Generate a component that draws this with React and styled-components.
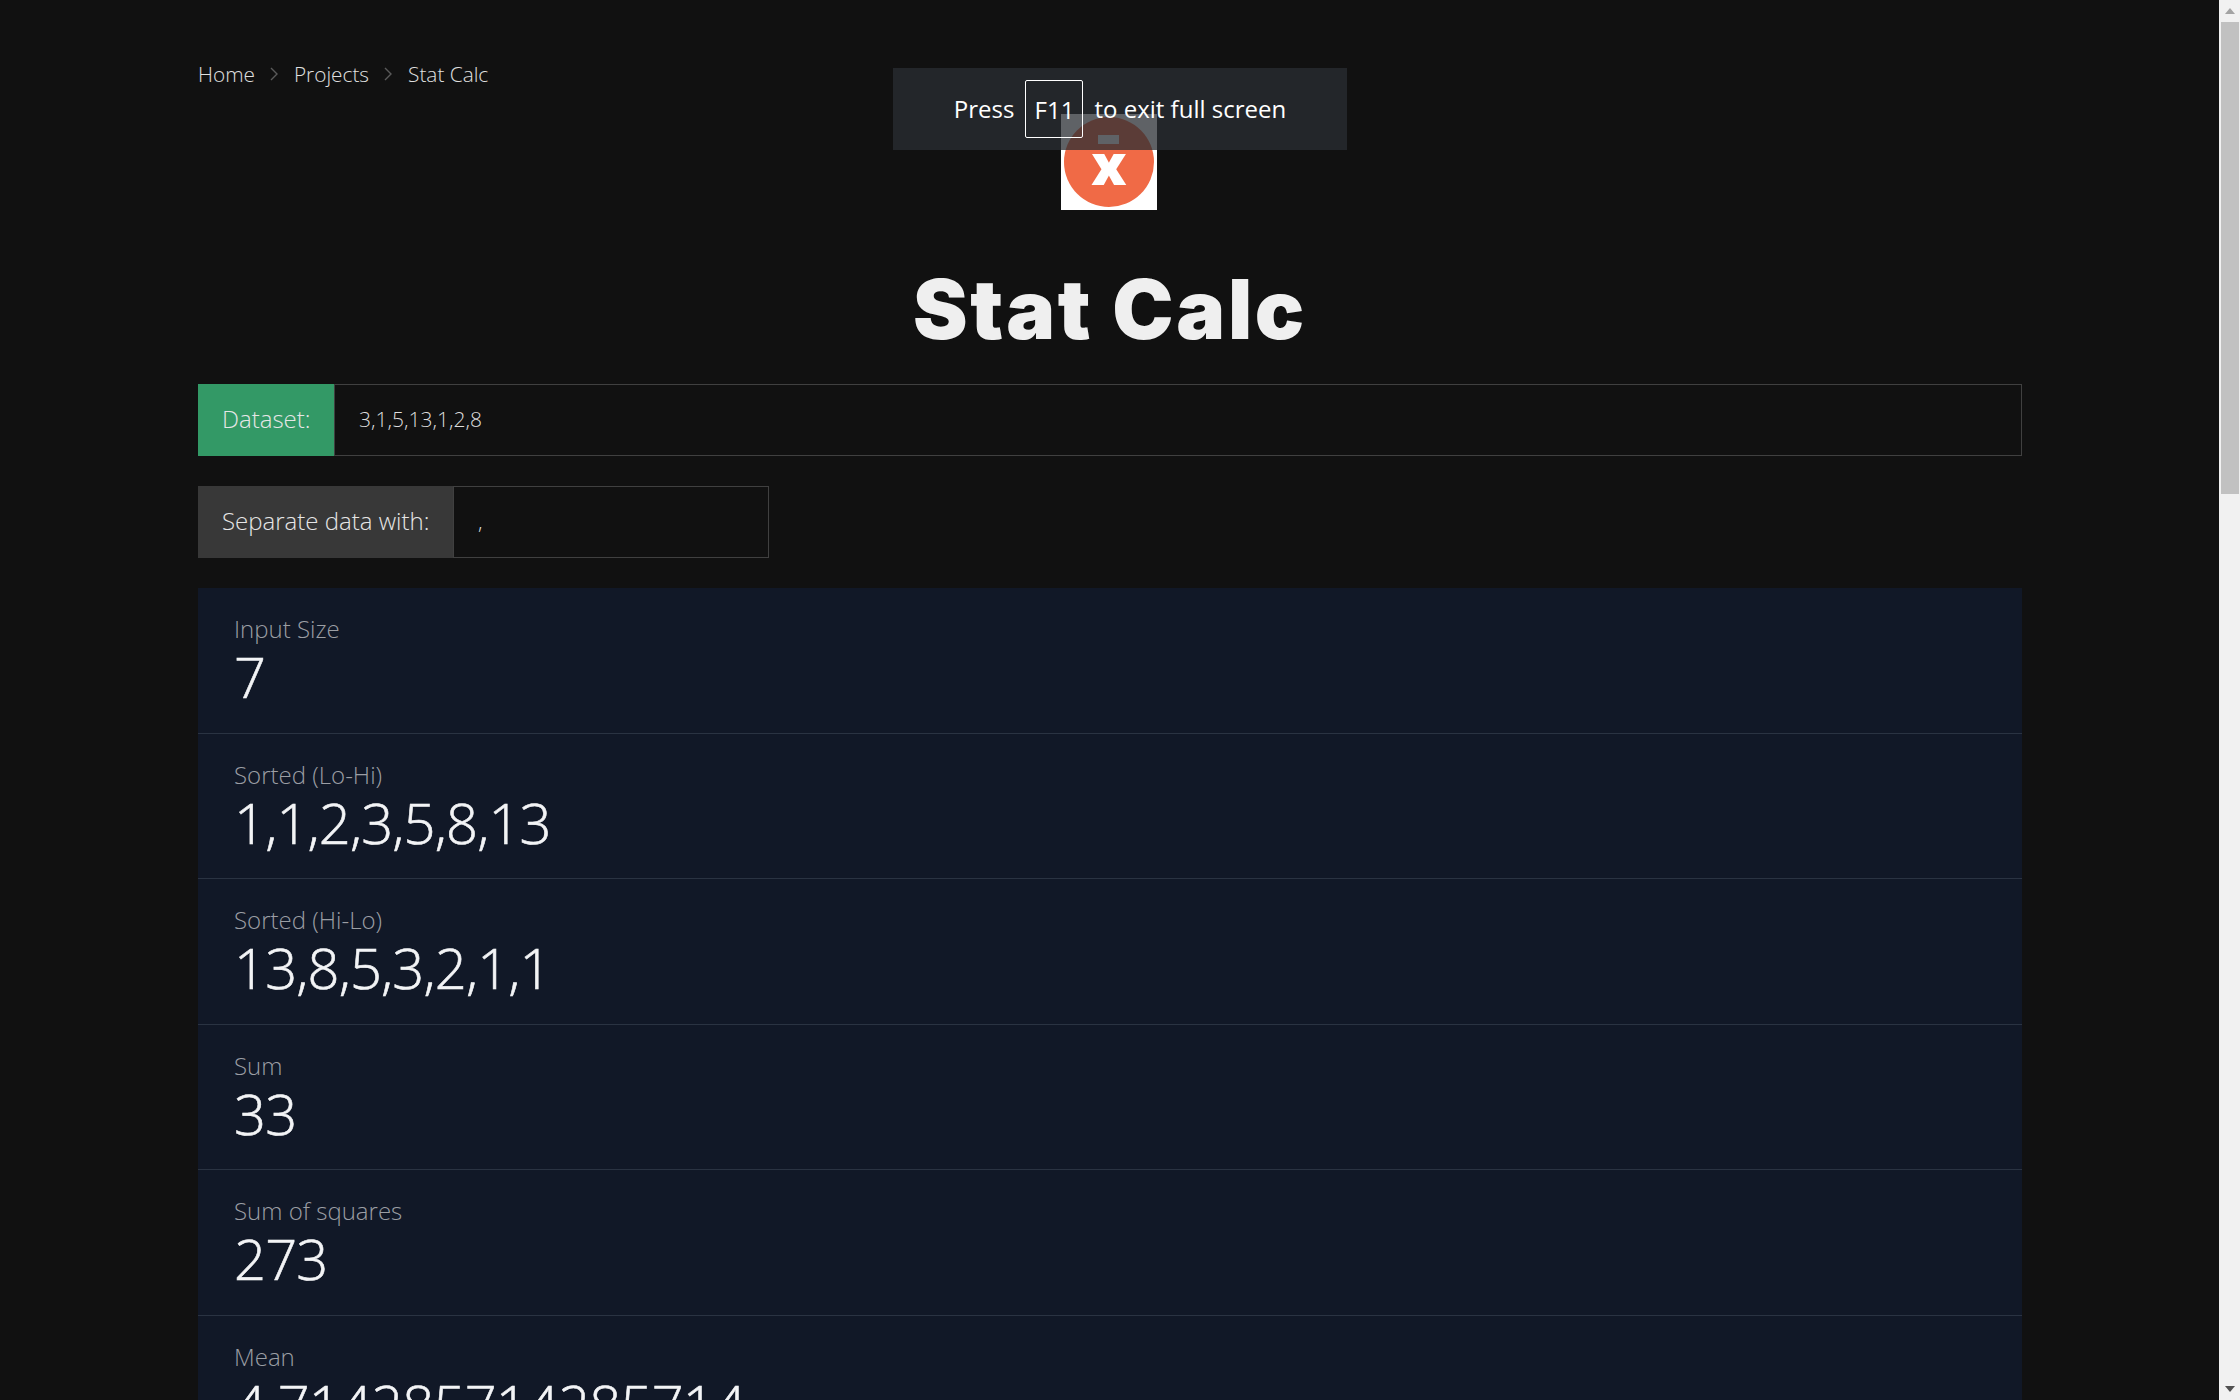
import styled, { createGlobalStyle } from "styled-components";

const dataset = [3, 1, 5, 13, 1, 2, 8];
const asc = [...dataset].sort((a, b) => a - b);
const desc = [...asc].reverse();
const sum = dataset.reduce((a, b) => a + b, 0);
const squares = dataset.reduce((a, b) => a + b * b, 0);

const stats = [
  { label: "Input Size", value: dataset.length },
  { label: "Sorted (Lo-Hi)", value: asc.join(",") },
  { label: "Sorted (Hi-Lo)", value: desc.join(",") },
  { label: "Sum", value: sum },
  { label: "Sum of squares", value: squares },
  { label: "Mean", value: sum / dataset.length },
];

const GlobalStyle = createGlobalStyle`
  html, body {
    margin: 0;
    padding: 0;
    height: 100%;
    overflow: hidden;
    background: #111111;
  }
  * {
    box-sizing: border-box;
  }
`;

const Page = styled.div`
  position: relative;
  display: flex;
  height: 100vh;
  overflow: hidden;
  background: #111111;
  font-family: "Open Sans", "Liberation Sans", sans-serif;
  font-weight: 300;
  color: #e5e5e5;
`;

const Main = styled.main`
  flex: 1;
  min-width: 0;
  padding: 56px 197px 0 198px;
`;

const Crumbs = styled.nav`
  display: flex;
  align-items: center;
  height: 36px;
  font-size: 20.8px;
  color: #e0e0e0;
`;

const Chevron = styled.svg`
  width: 10px;
  height: 14px;
  margin: 0 15px 0 14px;
  fill: none;
  stroke: #5a5a5a;
  stroke-width: 1.4;
`;

const Logo = styled.svg`
  display: block;
  width: 96px;
  height: 96px;
  margin: 22px 0 0 863px;
`;

const Title = styled.h1`
  margin: 50px 0 0;
  height: 124px;
  line-height: 100px;
  text-align: center;
  font-family: "Inter", "Liberation Sans", sans-serif;
  font-size: 82px;
  font-weight: 900;
  letter-spacing: 2.7px;
  color: #efefef;
`;

const Group = styled.div`
  display: flex;
  height: 72px;
  width: ${(p) => p.$width || "100%"};
  margin-top: ${(p) => p.$top || "0"};
  font-size: 24px;
`;

const Addon = styled.div`
  display: flex;
  align-items: center;
  width: ${(p) => p.$width};
  padding: 0 0 3px 24px;
  background: ${(p) => p.$bg};
  color: #e6e6e6;
  white-space: nowrap;
`;

const Field = styled.div`
  flex: 1;
  display: flex;
  align-items: center;
  padding: 0 0 2px 24px;
  border: 1px solid #404040;
  font-size: 21px;
  color: #dedede;
`;

const Results = styled.section`
  margin-top: 30px;
  background: #111827;
`;

const Row = styled.div`
  height: 145.6px;
  padding: 24px 36px 0;
  border-bottom: 1px solid #2a3342;
`;

const Label = styled.div`
  font-size: 24px;
  line-height: 34px;
  color: #9b9ea4;
`;

const Value = styled.div`
  font-size: 56px;
  line-height: 60px;
  letter-spacing: -0.8px;
  -webkit-text-stroke: 0.6px #f3f4f6;
  color: #f3f4f6;
`;

const Rail = styled.aside`
  flex: none;
  display: flex;
  flex-direction: column;
  justify-content: space-between;
  width: 21px;
  background: #f1f1f1;
`;

const RailEnd = styled.div`
  height: 22px;
  display: flex;
  align-items: center;
  justify-content: center;
`;

const Arrow = styled.svg`
  width: 10px;
  height: 6px;
  fill: ${(p) => p.$fill};
`;

const Thumb = styled.div`
  height: 472px;
  margin: 0 1px auto 2px;
  background: #c1c1c1;
`;

const Toast = styled.div`
  position: absolute;
  left: 893px;
  top: 68px;
  width: 454px;
  height: 82px;
  padding-bottom: 2px;
  display: flex;
  align-items: center;
  justify-content: center;
  gap: 11px;
  background: rgba(42, 46, 51, 0.75);
  font-size: 24px;
  font-weight: 400;
  color: #ffffff;
`;

const Key = styled.span`
  display: flex;
  align-items: center;
  justify-content: center;
  width: 58px;
  height: 58px;
  margin-bottom: -2px;
  border: 1px solid #ffffff;
  border-radius: 2px;
`;

const CrumbSep = () => (
  <Chevron viewBox="0 0 10 14">
    <path d="M2 1l6 6-6 6" />
  </Chevron>
);

export default function App() {
  return (
    <Page>
      <GlobalStyle />
      <Main>
        <Crumbs>
          <span>Home</span>
          <CrumbSep />
          <span>Projects</span>
          <CrumbSep />
          <span>Stat Calc</span>
        </Crumbs>
        <Logo viewBox="0 0 96 96">
          <rect width="96" height="96" fill="#ffffff" />
          <circle cx="48" cy="48" r="45" fill="#f06a46" />
          <rect x="37" y="21" width="21" height="9" fill="#ffffff" />
          <text
            x="48"
            y="71"
            textAnchor="middle"
            fontFamily="'Open Sans', sans-serif"
            fontWeight="800"
            fontSize="56"
            fill="#ffffff"
          >
            x
          </text>
        </Logo>
        <Title>Stat Calc</Title>
        <Group>
          <Addon $width="136px" $bg="#339966">
            Dataset:
          </Addon>
          <Field>{dataset.join(",")}</Field>
        </Group>
        <Group $width="571px" $top="30px">
          <Addon $width="255px" $bg="#383838">
            Separate data with:
          </Addon>
          <Field>,</Field>
        </Group>
        <Results>
          {stats.map((s) => (
            <Row key={s.label}>
              <Label>{s.label}</Label>
              <Value>{s.value}</Value>
            </Row>
          ))}
        </Results>
      </Main>
      <Rail>
        <RailEnd>
          <Arrow viewBox="0 0 10 6" $fill="#a3a3a3">
            <polygon points="0,6 5,0 10,6" />
          </Arrow>
        </RailEnd>
        <Thumb />
        <RailEnd>
          <Arrow viewBox="0 0 10 6" $fill="#505050">
            <polygon points="0,0 10,0 5,6" />
          </Arrow>
        </RailEnd>
      </Rail>
      <Toast>
        Press <Key>F11</Key> to exit full screen
      </Toast>
    </Page>
  );
}
